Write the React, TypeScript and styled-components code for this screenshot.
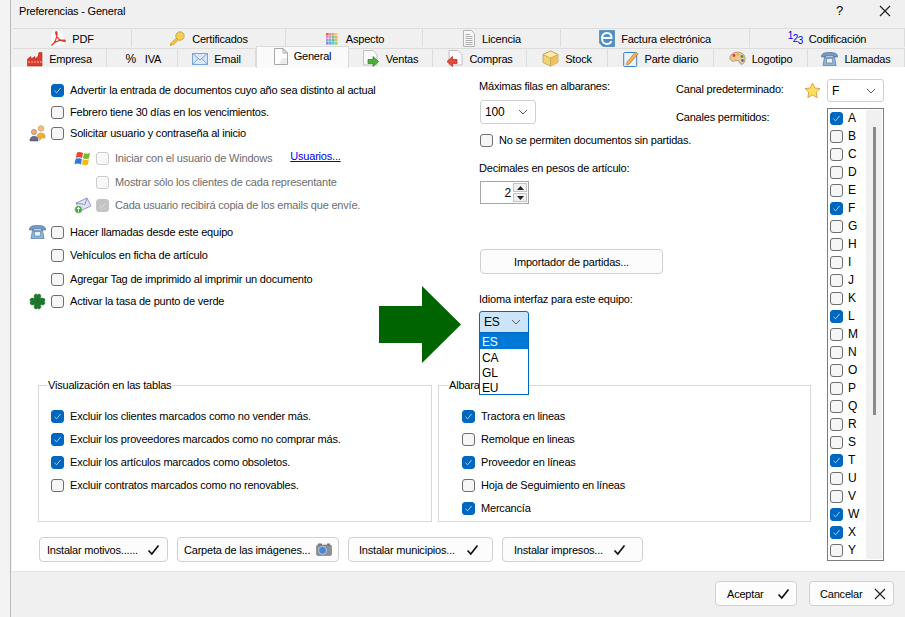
import React from 'react'
import styled, { createGlobalStyle } from 'styled-components'

const GlobalStyle = createGlobalStyle`
  html, body { margin: 0; padding: 0; background: #f3f3f3; }
  body { font-family: "Liberation Sans", Arial, sans-serif; font-size: 11px; letter-spacing: -0.2px; color: #000; }
`

const Desktop = styled.div`
  width: 905px;
  height: 617px;
  overflow: hidden;
  display: flex;
  background: #f3f3f3;
`
const Dialog = styled.div`
  flex: 1;
  margin-left: 10px;
  border-left: 1px solid #b8b8b8;
  display: flex;
  flex-direction: column;
  background: #f0f0f0;
`
const TitleBar = styled.div`
  height: 28px;
  display: flex;
  align-items: flex-start;
  padding: 0 14px 0 8px;
`
const TitleText = styled.div`
  flex: 1;
  line-height: 22px;
`
const TitleHelp = styled.div`
  width: 43px;
  line-height: 21px;
  font-size: 13px;
`
const TitleClose = styled.div`
  width: 12px;
  height: 21px;
  display: flex;
  align-items: center;
`
const Tabs = styled.div`
  padding-left: 2px;
  height: 39px;
  display: flex;
  flex-direction: column;
`
const TabRow = styled.div<{ $h: number }>`
  display: flex;
  height: ${p => p.$h}px;
  align-items: flex-end;
`
const Tab = styled.div<{ $w: number; $active?: boolean }>`
  width: ${p => p.$w}px;
  height: ${p => (p.$active ? 22 : 19)}px;
  flex: none;
  box-sizing: border-box;
  display: flex;
  align-items: center;
  justify-content: center;
  gap: 6px;
  background: ${p => (p.$active ? '#fafafa' : '#f0f0f0')};
  border-top: 1px solid #dcdcdc;
  border-right: 1px solid #dcdcdc;
  border-left: ${p => (p.$active ? '1px solid #dcdcdc' : 'none')};
  padding-top: ${p => (p.$active ? 0 : 1)}px;
  padding-bottom: ${p => (p.$active ? 3 : 0)}px;
  margin-bottom: ${p => (p.$active ? -1 : 0)}px;
  position: relative;
  z-index: ${p => (p.$active ? 2 : 1)};
`
const Percent = styled.span`
  width: 16px;
  text-align: center;
  font-size: 12px;
`
const Numbers = styled.span`
  display: flex;
  width: 15px;
  color: #0000e0;
  font-size: 10px;
  line-height: 10px;
`
const NumberDigit = styled.span<{ $shift: number }>`
  transform: translateY(${p => p.$shift}px);
  width: 5px;
`
const Sheet = styled.div`
  height: 504px;
  margin-left: 1px;
  display: flex;
  background: #fff;
  position: relative;
  border-bottom: 1px solid #e4e4e4;
`
const MainArea = styled.div`
  width: 815px;
  flex: none;
`
const TopRow = styled.div`
  height: 311px;
  display: flex;
`
const LeftColumn = styled.div`
  width: 468px;
  flex: none;
  box-sizing: border-box;
  padding: 13px 0 0 17px;
`
const MiddleColumn = styled.div`
  width: 197px;
  flex: none;
  padding-top: 12px;
`
const LabelColumn = styled.div`
  flex: 1;
  padding-top: 15px;
`
const ChannelRow = styled.div`
  display: flex;
  justify-content: space-between;
  padding-right: 6px;
`
const OptionRow = styled.div<{ $top?: number; $indent?: number }>`
  height: 20px;
  display: flex;
  align-items: center;
  margin-top: ${p => p.$top ?? 0}px;
  margin-left: ${p => p.$indent ?? 0}px;
`
const IconSlot = styled.span`
  width: 20px;
  margin-right: 2px;
  flex: none;
  display: flex;
  justify-content: flex-start;
`
const Box = styled.span<{ $checked?: boolean; $disabled?: boolean }>`
  width: 13px;
  height: 13px;
  flex: none;
  box-sizing: border-box;
  border-radius: 3px;
  display: flex;
  align-items: center;
  justify-content: center;
  margin-right: 6px;
  border: 1px solid ${p => (p.$checked ? (p.$disabled ? '#c4c4c4' : '#0067c0') : p.$disabled ? '#cccccc' : '#6e6e6e')};
  background: ${p => (p.$checked ? (p.$disabled ? '#c4c4c4' : '#0067c0') : p.$disabled ? '#f8f8f8' : '#f6f6f6')};
`
const OptionText = styled.span<{ $disabled?: boolean }>`
  color: ${p => (p.$disabled ? '#6d6d6d' : '#000')};
  white-space: nowrap;
`
const UsersLink = styled.a`
  color: #0000ee;
  text-decoration: underline;
  margin-left: 18px;
  align-self: flex-start;
  line-height: 16px;
`
const FieldLabel = styled.div<{ $top?: number }>`
  line-height: 14px;
  white-space: nowrap;
  margin-top: ${p => p.$top ?? 0}px;
  margin-left: -1px;
`
const Select = styled.div<{ $w: number; $h: number; $top?: number; $open?: boolean }>`
  position: relative;
  box-sizing: border-box;
  width: ${p => p.$w}px;
  height: ${p => p.$h}px;
  margin-top: ${p => p.$top ?? 0}px;
  margin-left: ${p => (p.$open ? -1 : 0)}px;
  display: flex;
  align-items: center;
  justify-content: space-between;
  padding: 0 7px 0 4px;
  font-size: 12px;
  border: 1px solid ${p => (p.$open ? '#0067c0' : '#d0d0d0')};
  border-radius: ${p => (p.$open ? '3px 3px 0 0' : '3px')};
  background: ${p => (p.$open ? '#cce4f7' : '#fff')};
`
const Popup = styled.div`
  position: absolute;
  left: -1px;
  top: 100%;
  box-sizing: border-box;
  width: 50px;
  height: 63px;
  border: 1px solid #0067c0;
  background: #fff;
  z-index: 5;
`
const PopupItem = styled.div<{ $selected?: boolean }>`
  height: ${p => (p.$selected ? 16 : 15)}px;
  line-height: ${p => (p.$selected ? 19 : 19)}px;
  padding-left: 2px;
  background: ${p => (p.$selected ? '#0078d7' : 'transparent')};
  color: ${p => (p.$selected ? '#fff' : '#000')};
`
const Spin = styled.div`
  margin-top: 6px;
  box-sizing: border-box;
  width: 49px;
  height: 23px;
  border: 1px solid #a6a6a6;
  display: flex;
  align-items: center;
  justify-content: flex-end;
  padding-right: 1px;
  gap: 2px;
  font-size: 12px;
`
const SpinButtons = styled.div`
  width: 14px;
  display: flex;
  flex-direction: column;
  gap: 1px;
`
const SpinButton = styled.div`
  height: 9px;
  box-sizing: border-box;
  background: #f0f0f0;
  border: 1px solid #c4c4c4;
  display: flex;
  align-items: center;
  justify-content: center;
`
const Button = styled.div<{ $w: number; $top?: number }>`
  width: ${p => p.$w}px;
  height: 25px;
  flex: none;
  box-sizing: border-box;
  margin-top: ${p => p.$top ?? 0}px;
  border: 1px solid #d0d0d0;
  border-radius: 4px;
  background: #fcfcfc;
  display: flex;
  align-items: center;
  justify-content: center;
  white-space: nowrap;
`
const IconButton = styled(Button)<{ $left: number; $right: number }>`
  justify-content: space-between;
  padding: 0 ${p => p.$right}px 0 ${p => p.$left}px;
`
const Groups = styled.div`
  display: flex;
  padding-left: 26px;
  gap: 6px;
`
const Group = styled.fieldset<{ $w: number; $pad: number }>`
  width: ${p => p.$w}px;
  height: 144px;
  box-sizing: border-box;
  margin: 0;
  padding: 14px 0 0 ${p => p.$pad}px;
  min-width: 0;
  border: 1px solid #d9d9d9;
  display: flex;
  flex-direction: column;
  gap: 3px;
`
const GroupTitle = styled.legend<{ $shift: number }>`
  padding: 0 1px;
  margin-left: ${p => p.$shift}px;
  line-height: 14px;
`
const ActionRow = styled.div`
  display: flex;
  gap: 9px;
  margin-top: 15px;
  padding-left: 27px;
`
const ChannelColumn = styled.div`
  width: 57px;
  flex: none;
  padding-top: 12px;
`
const ChannelList = styled.div`
  margin-top: 6px;
  box-sizing: border-box;
  height: 453px;
  border: 1px solid #7c7c7c;
  display: flex;
  overflow: hidden;
`
const ChannelItems = styled.div`
  flex: 1;
`
const ChannelItem = styled.div`
  height: 18px;
  display: flex;
  align-items: center;
  padding-left: 2px;
  font-size: 12px;
  & > span:first-child { margin-right: 5px; }
`
const ScrollTrack = styled.div`
  width: 16px;
  margin: 1px 1px 1px 0;
  background: #f0f0f0;
  display: flex;
  justify-content: center;
  padding-top: 17px;
`
const ScrollThumb = styled.div`
  width: 3px;
  height: 288px;
  background: #8a8a8a;
`
const Footer = styled.div`
  flex: 1;
  display: flex;
  justify-content: flex-end;
  gap: 12px;
  padding: 9px 11px 0 0;
`
const ArrowMark = styled.svg`
  position: absolute;
  left: 367px;
  top: 219px;
  z-index: 4;
`

const Tick = () => (
  <svg width="9" height="9" viewBox="0 0 9 9"><path d="M1.5 4.8 L3.6 6.8 L7.6 2" fill="none" stroke="#d5e6f7" strokeWidth="0.8" /></svg>
)
const Check = ({ checked, disabled }: { checked?: boolean; disabled?: boolean }) => (
  <Box $checked={checked} $disabled={disabled}>{checked && <Tick />}</Box>
)
const BlackCheck = () => (
  <svg width="13" height="12" viewBox="0 0 13 12"><path d="M1.5 6.5 L4.8 10 L11.5 1.5" fill="none" stroke="#111" strokeWidth="1.7" /></svg>
)
const CloseMark = ({ size = 12 }: { size?: number }) => (
  <svg width={size} height={size} viewBox="0 0 12 12"><path d="M1 1 L11 11 M11 1 L1 11" stroke="#222" strokeWidth="1.2" /></svg>
)
const Chevron = () => (
  <svg width="10" height="6" viewBox="0 0 10 6"><path d="M1 1 L5 5 L9 1" fill="none" stroke="#606060" strokeWidth="1" /></svg>
)

const PdfIcon = () => (
  <svg width="16" height="16" viewBox="0 0 16 16">
    <path d="M1 3 L9 0.5 L13 3 L15 14 L2 15.5Z" fill="#fff" />
    <path d="M1.5 14.5 C5 12 7.5 6 7 1.5 C6.8 0.5 5.6 0.6 5.7 2 C6 6 10 10.5 14.5 10.5 C15.6 10.5 15.6 9.3 14.3 9.2 C10 9 4.5 11 1.5 14.5Z" fill="none" stroke="#d8342a" strokeWidth="1.2" />
  </svg>
)
const KeyIcon = () => (
  <svg width="17" height="16" viewBox="0 0 17 16">
    <path d="M1 13 L8 6.5 L10 8.5 L4 14 L3 13 L2 15Z" fill="#f3c63f" stroke="#c79a24" strokeWidth="0.7" />
    <circle cx="11" cy="5" r="4.2" fill="#f6cf55" stroke="#c79a24" strokeWidth="0.8" />
    <circle cx="12.3" cy="3.6" r="1" fill="#fff" stroke="#c79a24" strokeWidth="0.5" />
  </svg>
)
const swatches = ['#e0625c', '#e9908c', '#f0a060', '#f3d060', '#e98fc0', '#c8a0e0', '#80c080', '#f0b070', '#7fa8e8', '#60c0d0', '#70c070', '#b8d860', '#9088e0', '#70a0e8', '#60c8c0', '#a0d070']
const SwatchIcon = () => (
  <svg width="16" height="16" viewBox="0 0 16 16">
    {swatches.map((c, i) => (
      <rect key={c + i} x={2 + (i % 4) * 3} y={2 + Math.floor(i / 4) * 3} width="2.6" height="2.6" fill={c} />
    ))}
  </svg>
)
const DocIcon = () => (
  <svg width="14" height="17" viewBox="0 0 14 17">
    <path d="M1.5 .5 H9.5 L12.5 3.5 V16.5 H1.5Z" fill="#f7f7f7" stroke="#b4b4b4" />
    <path d="M3.5 4.5 H8 M3.5 6.5 H10.5 M3.5 8.5 H10.5 M3.5 10.5 H10.5 M3.5 12.5 H10.5 M3.5 14.5 H10.5" stroke="#999" strokeWidth=".8" />
  </svg>
)
const InvoiceIcon = () => (
  <svg width="16" height="17" viewBox="0 0 16 17">
    <path d="M0.5 .5 H15.5 V16.5 H4 L0.5 13Z" fill="#4a90c8" stroke="#3a78aa" strokeWidth=".6" />
    <path d="M3.5 8 H12.5 C12.5 4.5 10.5 3 8 3 C5 3 3 5.2 3 8.5 C3 12 5.2 14 8 14 C10 14 11.5 13 12.5 11.3" fill="none" stroke="#fff" strokeWidth="2" />
  </svg>
)
const FactoryIcon = () => (
  <svg width="16" height="16" viewBox="0 0 16 16">
    <path d="M.5 8 L4 5.5 V8 L8 5.5 V8 L11 5.5 L12 1.5 H15 V15 H.5Z" fill="#dc3c2e" stroke="#a82a20" strokeWidth=".6" />
    <path d="M1 11 H15" stroke="#f6b0a0" strokeWidth="1" strokeDasharray="2 1" />
  </svg>
)
const MailIcon = () => (
  <svg width="16" height="12" viewBox="0 0 16 12">
    <rect x=".5" y=".5" width="15" height="11" fill="#d8e8f8" stroke="#7ba4d4" />
    <path d="M.5 .5 L8 7 L15.5 .5 M.5 11.5 L6 5.5 M15.5 11.5 L10 5.5" fill="none" stroke="#7ba4d4" />
  </svg>
)
const PageIcon = () => (
  <svg width="14" height="17" viewBox="0 0 14 17">
    <path d="M.5 .5 H9 L13.5 5 V16.5 H.5Z" fill="#fff" stroke="#a8a8a8" />
    <path d="M9 .5 V5 H13.5Z" fill="#e8e8e8" stroke="#a8a8a8" />
    <path d="M5 16 L8 10 H13 V16Z" fill="#ececec" />
  </svg>
)
const SaleIcon = () => (
  <svg width="17" height="17" viewBox="0 0 17 17">
    <path d="M.5 .5 H10 L14 4.5 V15 H.5Z" fill="#fafafa" stroke="#c0c0c0" />
    <path d="M5 9.5 H10 V6.5 L15.5 11.5 L10 16.5 V13.5 H5Z" fill="#4caf3c" stroke="#2c7a20" strokeWidth=".7" />
  </svg>
)
const PurchaseIcon = () => (
  <svg width="17" height="17" viewBox="0 0 17 17">
    <path d="M3 .5 H12 L16 4.5 V15 H3Z" fill="#fafafa" stroke="#c0c0c0" />
    <path d="M11 9.5 H6.5 V6.5 L1 11.5 L6.5 16.5 V13.5 H11Z" fill="#e8483a" stroke="#a82a20" strokeWidth=".7" />
  </svg>
)
const BoxIcon = () => (
  <svg width="17" height="17" viewBox="0 0 17 17">
    <path d="M8.5 1 L16 4.5 V12.5 L8.5 16 L1 12.5 V4.5Z" fill="#f2d27a" stroke="#b8963c" strokeWidth=".7" />
    <path d="M8.5 8 L16 4.5 V12.5 L8.5 16Z" fill="#eec25c" />
    <path d="M1 4.5 L8.5 8 L16 4.5 L8.5 1Z" fill="#fbe9ad" stroke="#b8963c" strokeWidth=".6" />
    <path d="M8.5 8 V16" stroke="#b8963c" strokeWidth=".6" />
  </svg>
)
const DiaryIcon = () => (
  <svg width="16" height="17" viewBox="0 0 16 17">
    <rect x=".7" y="2.5" width="13" height="14" rx="1" fill="#eaf3fb" stroke="#3d7fc4" />
    <path d="M4 12 L12.5 2 L15 4 L6.5 14 L3.5 15Z" fill="#f0b050" stroke="#a8742c" strokeWidth=".6" />
  </svg>
)
const PaletteIcon = () => (
  <svg width="17" height="15" viewBox="0 0 17 15">
    <path d="M1 6 C2 2 7 .5 11 1.5 C15 2.5 16.5 6 16 9 C15.5 12.5 13 14 11.5 13 C10 12 11 10 9 9.5 C6 9 5 11 3 10 C1.5 9.5 .6 8 1 6Z" fill="#e8c898" stroke="#a88050" strokeWidth=".7" />
    <circle cx="5" cy="4.5" r="1.4" fill="#d84030" />
    <circle cx="9" cy="3.5" r="1.4" fill="#f0c030" />
    <circle cx="13" cy="5.5" r="1.4" fill="#40a040" />
    <circle cx="13.5" cy="9.5" r="1.4" fill="#3878d0" />
  </svg>
)
const PhoneIcon = () => (
  <svg width="17" height="14" viewBox="0 0 17 14">
    <path d="M.5 4 C1 1 4 .5 8.5 .5 C13 .5 16 1 16.5 4 L16.5 5 H12.5 V3.5 H4.5 V5 H.5Z" fill="#6f9cc8" stroke="#43688e" strokeWidth=".6" />
    <path d="M3.5 5 H13.5 L15 13.5 H2Z" fill="#8fb6da" stroke="#43688e" strokeWidth=".6" />
    <rect x="5.5" y="6.5" width="6" height="4.5" fill="#e6f0f8" stroke="#43688e" strokeWidth=".5" />
  </svg>
)
const UsersIcon = () => (
  <svg width="18" height="17" viewBox="0 0 18 17">
    <circle cx="12" cy="3.5" r="2.8" fill="#f4c080" stroke="#b88040" strokeWidth=".5" />
    <path d="M8 11 C8 7 16 7 16 11 V13 H8Z" fill="#f0b040" stroke="#b88040" strokeWidth=".5" />
    <circle cx="5" cy="7" r="2.6" fill="#e8b080" stroke="#906030" strokeWidth=".5" />
    <path d="M1 15 C1 10 9 10 9 15 V16 H1Z" fill="#6a6a8a" stroke="#404060" strokeWidth=".5" />
    <path d="M10 15 L14 11 M13 9.5 L15.5 12" stroke="#e8b030" strokeWidth="2" />
  </svg>
)
const WindowsIcon = () => (
  <svg width="17" height="15" viewBox="0 0 17 15">
    <path d="M3 1.5 C5 .5 7 1 9 2 L8 7 C6 6 4 5.8 1.8 6.8Z" fill="#e8482c" />
    <path d="M10 2.3 C12 3 14 3 16 2 L15 7.2 C13 8.2 11 8 9 7.2Z" fill="#7cb82c" />
    <path d="M1.6 7.8 C4 6.8 6 7 7.8 8 L7 13.5 C5 12.4 3 12.3 .5 13.2Z" fill="#2a78d8" />
    <path d="M8.8 8.2 C11 9 13 9.2 14.8 8.2 L14 13.5 C12 14.5 10 14.2 8 13.5Z" fill="#f4b818" />
  </svg>
)
const SendMailIcon = () => (
  <svg width="18" height="17" viewBox="0 0 18 17">
    <path d="M2 6 L13 1 L17 9 L6 14Z" fill="#dfe2f2" stroke="#7478a8" strokeWidth=".7" />
    <path d="M2 6 L11 7.5 L13 1" fill="none" stroke="#7478a8" strokeWidth=".7" />
    <circle cx="4.5" cy="12.5" r="3.8" fill="#3ca63c" stroke="#fff" strokeWidth=".5" />
    <path d="M4.5 15 V10.5 M2.8 12.2 L4.5 10.3 L6.2 12.2" fill="none" stroke="#fff" strokeWidth="1" />
  </svg>
)
const CloverIcon = () => (
  <svg width="17" height="17" viewBox="0 0 17 17">
    <g fill="#1d7a2a" stroke="#0f5a1c" strokeWidth=".4">
      <path d="M8.5 8.5 C4 6 4.5 1 7 1 C8 1 8.5 2 8.5 2.5 C8.5 2 9 1 10 1 C12.5 1 13 6 8.5 8.5Z" />
      <path d="M8.5 8.5 C4 11 4.5 16 7 16 C8 16 8.5 15 8.5 14.5 C8.5 15 9 16 10 16 C12.5 16 13 11 8.5 8.5Z" />
      <path d="M8.5 8.5 C6 4 1 4.5 1 7 C1 8 2 8.5 2.5 8.5 C2 8.5 1 9 1 10 C1 12.5 6 13 8.5 8.5Z" />
      <path d="M8.5 8.5 C11 4 16 4.5 16 7 C16 8 15 8.5 14.5 8.5 C15 8.5 16 9 16 10 C16 12.5 11 13 8.5 8.5Z" />
    </g>
  </svg>
)
const StarIcon = () => (
  <svg width="17" height="17" viewBox="0 0 17 17">
    <path d="M8.5 1 L10.8 6 L16 6.6 L12.2 10.2 L13.2 15.6 L8.5 13 L3.8 15.6 L4.8 10.2 L1 6.6 L6.2 6Z" fill="#fde05a" stroke="#e0a050" strokeWidth="1" />
  </svg>
)
const CameraIcon = () => (
  <svg width="16" height="13" viewBox="0 0 16 13">
    <rect x=".5" y="2" width="15" height="10.5" rx="1.5" fill="#8a8f98" stroke="#666" strokeWidth=".5" />
    <rect x="2" y=".5" width="4" height="2" fill="#777" />
    <rect x="11" y=".5" width="3" height="2" fill="#777" />
    <circle cx="6.5" cy="7.3" r="4" fill="#4d86d0" stroke="#cfd8e6" strokeWidth=".8" />
  </svg>
)

type OptionProps = {
  label: string
  icon?: React.ReactNode
  checked?: boolean
  disabled?: boolean
  top?: number
  indent?: number
  children?: React.ReactNode
}

const Option = ({ label, icon, checked, disabled, top, indent, children }: OptionProps) => (
  <OptionRow $top={top} $indent={indent}>
    <IconSlot>{icon}</IconSlot>
    <Check checked={checked} disabled={disabled} />
    <OptionText $disabled={disabled}>{label}</OptionText>
    {children}
  </OptionRow>
)

const GroupOption = ({ label, checked }: { label: string; checked?: boolean }) => (
  <OptionRow>
    <Check checked={checked} />
    <OptionText>{label}</OptionText>
  </OptionRow>
)

const channels = 'ABCDEFGHIJKLMNOPQRSTUVWXY'.split('')
const enabledChannels = ['A', 'F', 'L', 'T', 'W', 'X']

export default function App() {
  return (
    <Desktop>
      <GlobalStyle />
      <Dialog>
        <TitleBar>
          <TitleText>Preferencias - General</TitleText>
          <TitleHelp>?</TitleHelp>
          <TitleClose><CloseMark /></TitleClose>
        </TitleBar>
        <Tabs>
          <TabRow $h={19}>
            <Tab $w={119}><PdfIcon />PDF</Tab>
            <Tab $w={154}><KeyIcon />Certificados</Tab>
            <Tab $w={137}><SwatchIcon />Aspecto</Tab>
            <Tab $w={138}><DocIcon />Licencia</Tab>
            <Tab $w={189}><InvoiceIcon />Factura electrónica</Tab>
            <Tab $w={155}>
              <Numbers>
                <NumberDigit $shift={-3}>1</NumberDigit>
                <NumberDigit $shift={0}>2</NumberDigit>
                <NumberDigit $shift={2}>3</NumberDigit>
              </Numbers>
              Codificación
            </Tab>
          </TabRow>
          <TabRow $h={20}>
            <Tab $w={94}><FactoryIcon />Empresa</Tab>
            <Tab $w={71}><Percent>%</Percent>IVA</Tab>
            <Tab $w={78}><MailIcon />Email</Tab>
            <Tab $w={93} $active><PageIcon />General</Tab>
            <Tab $w={84}><SaleIcon />Ventas</Tab>
            <Tab $w={94}><PurchaseIcon />Compras</Tab>
            <Tab $w={81}><BoxIcon />Stock</Tab>
            <Tab $w={106}><DiaryIcon />Parte diario</Tab>
            <Tab $w={94}><PaletteIcon />Logotipo</Tab>
            <Tab $w={97}><PhoneIcon />Llamadas</Tab>
          </TabRow>
        </Tabs>
        <Sheet>
          <MainArea>
            <TopRow>
              <LeftColumn>
                <Option checked label="Advertir la entrada de documentos cuyo año sea distinto al actual" />
                <Option top={2} label="Febrero tiene 30 días en los vencimientos." />
                <Option top={1} icon={<UsersIcon />} label="Solicitar usuario y contraseña al inicio" />
                <Option top={5} indent={45} disabled icon={<WindowsIcon />} label="Iniciar con el usuario de Windows">
                  <UsersLink>Usuarios...</UsersLink>
                </Option>
                <Option top={4} indent={45} disabled label="Mostrar sólo los clientes de cada representante" />
                <Option top={3} indent={45} disabled checked icon={<SendMailIcon />} label="Cada usuario recibirá copia de los emails que envíe." />
                <Option top={7} icon={<PhoneIcon />} label="Hacer llamadas desde este equipo" />
                <Option top={3} label="Vehículos en ficha de artículo" />
                <Option top={4} label="Agregar Tag de imprimido al imprimir un documento" />
                <Option top={2} icon={<CloverIcon />} label="Activar la tasa de punto de verde" />
              </LeftColumn>
              <MiddleColumn>
                <FieldLabel>Máximas filas en albaranes:</FieldLabel>
                <Select $w={56} $h={24} $top={7}>100<Chevron /></Select>
                <OptionRow $top={6}>
                  <Check />
                  <OptionText>No se permiten documentos sin partidas.</OptionText>
                </OptionRow>
                <FieldLabel $top={11}>Decimales en pesos de artículo:</FieldLabel>
                <Spin>
                  2
                  <SpinButtons>
                    <SpinButton><svg width="7" height="4" viewBox="0 0 7 4"><path d="M3.5 0 L7 4 H0Z" fill="#222" /></svg></SpinButton>
                    <SpinButton><svg width="7" height="4" viewBox="0 0 7 4"><path d="M0 0 H7 L3.5 4Z" fill="#222" /></svg></SpinButton>
                  </SpinButtons>
                </Spin>
                <Button $w={183} $top={45}>Importador de partidas...</Button>
                <FieldLabel $top={18}>Idioma interfaz para este equipo:</FieldLabel>
                <Select $w={50} $h={22} $top={5} $open>
                  ES<Chevron />
                  <Popup>
                    <PopupItem $selected>ES</PopupItem>
                    <PopupItem>CA</PopupItem>
                    <PopupItem>GL</PopupItem>
                    <PopupItem>EU</PopupItem>
                  </Popup>
                </Select>
              </MiddleColumn>
              <LabelColumn>
                <ChannelRow>
                  <FieldLabel>Canal predeterminado:</FieldLabel>
                  <StarIcon />
                </ChannelRow>
                <FieldLabel $top={11}>Canales permitidos:</FieldLabel>
              </LabelColumn>
            </TopRow>
            <Groups>
              <Group $w={394} $pad={12}>
                <GroupTitle $shift={-4}>Visualización en las tablas</GroupTitle>
                <GroupOption checked label="Excluir los clientes marcados como no vender más." />
                <GroupOption checked label="Excluir los proveedores marcados como no comprar más." />
                <GroupOption checked label="Excluir los artículos marcados como obsoletos." />
                <GroupOption label="Excluir contratos marcados como no renovables." />
              </Group>
              <Group $w={373} $pad={23}>
                <GroupTitle $shift={-14}>Albaranes</GroupTitle>
                <GroupOption checked label="Tractora en lineas" />
                <GroupOption label="Remolque en lineas" />
                <GroupOption checked label="Proveedor en líneas" />
                <GroupOption label="Hoja de Seguimiento en líneas" />
                <GroupOption checked label="Mercancía" />
              </Group>
            </Groups>
            <ActionRow>
              <IconButton $w={129} $left={7} $right={7}>Instalar motivos......<BlackCheck /></IconButton>
              <IconButton $w={162} $left={6} $right={6}>Carpeta de las imágenes...<CameraIcon /></IconButton>
              <IconButton $w={145} $left={10} $right={13}>Instalar municipios...<BlackCheck /></IconButton>
              <IconButton $w={141} $left={11} $right={16}>Instalar impresos...<BlackCheck /></IconButton>
            </ActionRow>
          </MainArea>
          <ChannelColumn>
            <Select $w={57} $h={23}>F<Chevron /></Select>
            <ChannelList>
              <ChannelItems>
                {channels.map(c => (
                  <ChannelItem key={c}>
                    <Check checked={enabledChannels.includes(c)} />
                    {c}
                  </ChannelItem>
                ))}
              </ChannelItems>
              <ScrollTrack><ScrollThumb /></ScrollTrack>
            </ChannelList>
          </ChannelColumn>
          <ArrowMark width="82" height="77" viewBox="0 0 82 77">
            <path d="M0 20 H43 V0 L82 38.5 L43 77 V57 H0Z" fill="#006400" />
          </ArrowMark>
        </Sheet>
        <Footer>
          <IconButton $w={82} $left={11} $right={6}>Aceptar<BlackCheck /></IconButton>
          <IconButton $w={85} $left={10} $right={7}>Cancelar<CloseMark /></IconButton>
        </Footer>
      </Dialog>
    </Desktop>
  )
}
